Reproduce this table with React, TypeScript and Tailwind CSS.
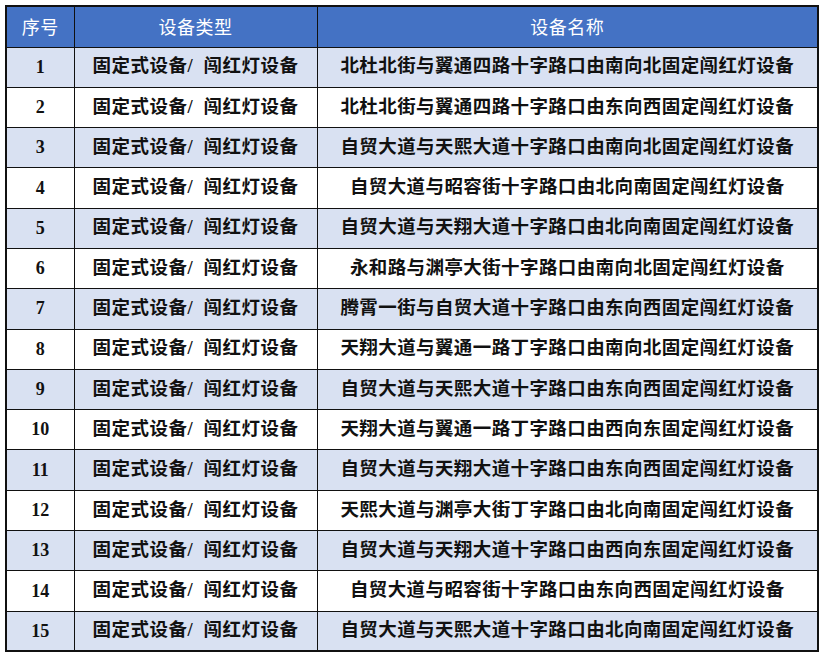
import React from "react";

interface Device {
  type: string;
  name: string;
}

const TYPE = "固定式设备/\u00a0\u00a0闯红灯设备";

const devices: Device[] = [
  { type: TYPE, name: "北杜北街与翼通四路十字路口由南向北固定闯红灯设备" },
  { type: TYPE, name: "北杜北街与翼通四路十字路口由东向西固定闯红灯设备" },
  { type: TYPE, name: "自贸大道与天熙大道十字路口由南向北固定闯红灯设备" },
  { type: TYPE, name: "自贸大道与昭容街十字路口由北向南固定闯红灯设备" },
  { type: TYPE, name: "自贸大道与天翔大道十字路口由北向南固定闯红灯设备" },
  { type: TYPE, name: "永和路与渊亭大街十字路口由南向北固定闯红灯设备" },
  { type: TYPE, name: "腾霄一街与自贸大道十字路口由东向西固定闯红灯设备" },
  { type: TYPE, name: "天翔大道与翼通一路丁字路口由南向北固定闯红灯设备" },
  { type: TYPE, name: "自贸大道与天熙大道十字路口由东向西固定闯红灯设备" },
  { type: TYPE, name: "天翔大道与翼通一路丁字路口由西向东固定闯红灯设备" },
  { type: TYPE, name: "自贸大道与天翔大道十字路口由东向西固定闯红灯设备" },
  { type: TYPE, name: "天熙大道与渊亭大街丁字路口由北向南固定闯红灯设备" },
  { type: TYPE, name: "自贸大道与天翔大道十字路口由西向东固定闯红灯设备" },
  { type: TYPE, name: "自贸大道与昭容街十字路口由东向西固定闯红灯设备" },
  { type: TYPE, name: "自贸大道与天熙大道十字路口由北向南固定闯红灯设备" },
];

const cell = "border border-[#111] text-center align-middle p-0";

export default function App() {
  return (
    <div className="w-[823px] h-[655px] bg-white pt-[5px] pl-[5px]">
      <table
        className="border-collapse border-2 border-[#111] table-fixed w-[812px]"
        style={{ fontFamily: '"Liberation Serif", "Noto Sans CJK SC", serif' }}
      >
        <colgroup>
          <col className="w-[68px]" />
          <col className="w-[243px]" />
          <col className="w-[501px]" />
        </colgroup>
        <thead>
          <tr className="h-[41px] bg-[#4472c4] text-white text-[18px] font-['Noto_Sans_CJK_SC',sans-serif] tracking-[0.5px]">
            <th className={`${cell} font-normal`}>序号</th>
            <th className={`${cell} font-normal`}>设备类型</th>
            <th className={`${cell} font-normal`}>设备名称</th>
          </tr>
        </thead>
        <tbody>
          {devices.map((d, i) => (
            <tr
              key={i}
              className={`h-[40.3px] text-[#111] font-bold ${i % 2 === 0 ? "bg-[#d9e1f2]" : "bg-white"}`}
            >
              <td className={`${cell} text-[18px]`}>{i + 1}</td>
              <td className={`${cell} text-[18.5px] tracking-[0.5px]`}>{d.type}</td>
              <td className={`${cell} text-[18.5px] tracking-[0.4px]`}>{d.name}</td>
            </tr>
          ))}
        </tbody>
      </table>
    </div>
  );
}
